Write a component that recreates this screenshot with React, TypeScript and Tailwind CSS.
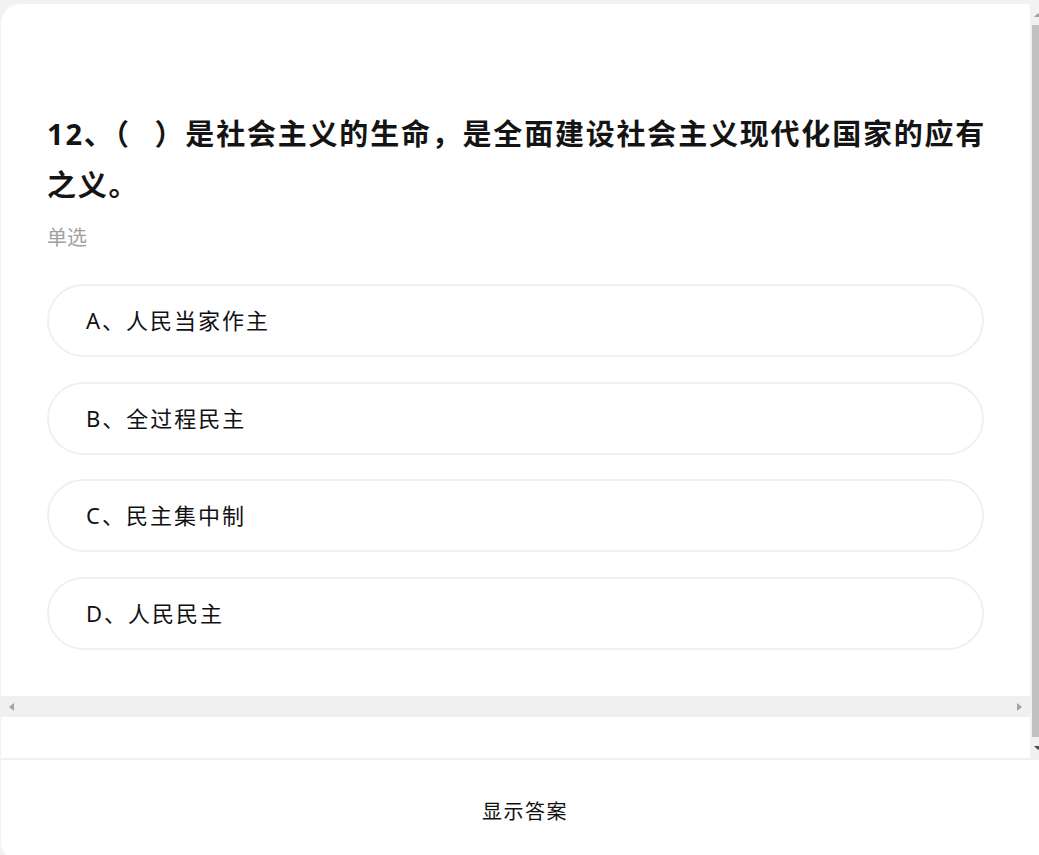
import React from 'react'

const options = ['A、人民当家作主', 'B、全过程民主', 'C、民主集中制', 'D、人民民主']

const title = '12、（\u00a0\u00a0）是社会主义的生命，是全面建设社会主义现代化国家的应有之义。'

const font = { fontFamily: '"Noto Sans", "Noto Sans CJK SC", sans-serif' }

export default function App() {
  return (
    <div className="w-full h-[855px] overflow-hidden bg-[#f2f2f2] pt-1 pl-px" style={font}>
      <div className="w-[1044px] h-[858px] bg-white rounded-[20px] overflow-hidden flex flex-col">
        {/* scroll region */}
        <div className="h-[754px] flex">
          <div className="w-[1029px] flex flex-col">
            <div className="flex-1 pl-[46px] pr-[40px] pt-[104px]">
              <h1 className="text-[29px] leading-[51px] font-bold tracking-[1.8px] [word-spacing:2.5px] text-[#141414]">
                {title}
              </h1>
              <div className="mt-[14px] text-[20px] leading-[28px] text-[#a0a0a0]">单选</div>
              <div className="mt-[32px] mr-[6px] flex flex-col gap-[24.5px]">
                {options.map((o) => (
                  <div
                    key={o}
                    className="h-[73px] rounded-full border-2 border-[#f0f0f0] flex items-center pl-[37px] text-[22px] tracking-[2px] text-[#111]"
                  >
                    {o}
                  </div>
                ))}
              </div>
            </div>
            {/* horizontal scrollbar */}
            <div className="h-[21px] bg-[#f0f0f0] flex items-center justify-between">
              <div className="w-[21px] flex justify-center">
                <div className="w-0 h-0 border-y-[4.5px] border-y-transparent border-r-[5px] border-r-[#a3a3a3]" />
              </div>
              <div className="w-[21px] flex justify-center">
                <div className="w-0 h-0 border-y-[4.5px] border-y-transparent border-l-[5px] border-l-[#a3a3a3]" />
              </div>
            </div>
            <div className="h-[41px]" />
          </div>
          {/* vertical scrollbar */}
          <div className="w-[15px] bg-[#f1f1f1] flex flex-col">
            <div className="h-[21px] flex items-center justify-center">
              <div className="w-0 h-0 border-x-[4px] border-x-transparent border-b-[4px] border-b-[#a3a3a3]" />
            </div>
            <div className="flex-1 mx-[2px] bg-[#c1c1c1]" />
            <div className="h-[21px] flex items-center justify-center">
              <div className="w-0 h-0 border-x-[4px] border-x-transparent border-t-[4px] border-t-[#505050]" />
            </div>
          </div>
        </div>
        {/* footer */}
        <div className="flex-1 border-t-2 border-[#f0f0f0] pl-[4px]">
          <div className="pt-[38px] text-center text-[20px] leading-[28px] tracking-[1.5px] text-[#111]">显示答案</div>
        </div>
      </div>
    </div>
  )
}
